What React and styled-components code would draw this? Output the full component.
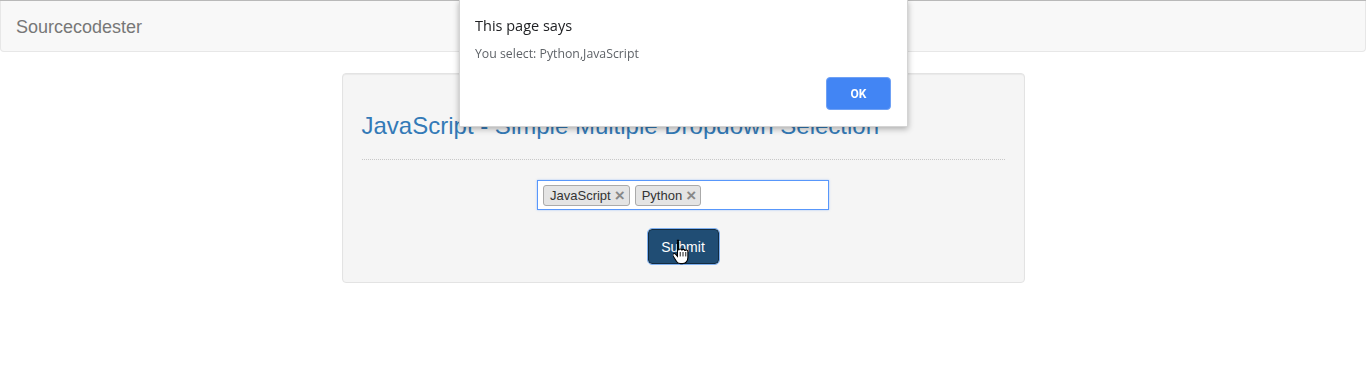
import React from "react";
import styled, { createGlobalStyle } from "styled-components";

const Global = createGlobalStyle`
  html, body { margin: 0; padding: 0; background: #fff; }
  body { font-family: "Liberation Sans", Arial, sans-serif; font-size: 14px; color: #333; }
  * { box-sizing: border-box; }
`;

const TopEdge = styled.div`
  height: 1px;
  background: #b9b9b9;
`;

const Navbar = styled.nav`
  height: 51px;
  background: #f8f8f8;
  border: 1px solid #e7e7e7;
  border-top: none;
  border-radius: 0 0 4px 4px;
  display: flex;
  align-items: center;
  padding: 2px 15px 0;
  margin-bottom: 21px;
`;

const Brand = styled.a`
  font-size: 18px;
  color: #777;
  text-decoration: none;
`;

const Well = styled.div`
  width: 683px;
  margin: 0 auto;
  background: #f5f5f5;
  border: 1px solid #e3e3e3;
  border-radius: 4px;
  box-shadow: inset 0 1px 1px rgba(0, 0, 0, 0.05);
  padding: 19px 19px 18px;
`;

const Title = styled.h3`
  margin: 20px 0 0;
  font-size: 24px;
  font-weight: 400;
  line-height: 26px;
  color: #337ab7;
`;

const Rule = styled.hr`
  margin: 20px 0 20px;
  border: 0;
  border-top: 1px dotted #c8c8c8;
`;

const Center = styled.div`
  display: flex;
  flex-direction: column;
  align-items: center;
  gap: 19px;
`;

const SelectBox = styled.div`
  width: 292px;
  height: 30px;
  background: #fff;
  border: 1px solid #5897fb;
  box-shadow: 0 0 2px rgba(88, 151, 251, 0.5);
  display: flex;
  align-items: center;
  gap: 5px;
  padding: 0 5px;
`;

const Tag = styled.span`
  display: inline-flex;
  align-items: center;
  gap: 4px;
  height: 21px;
  padding: 0 4px 0 6px;
  background: #e4e4e4;
  border: 1px solid #aaa;
  border-radius: 3px;
  font-size: 13px;
  color: #333;
`;

const Remove = styled.span`
  color: #888;
  font-weight: 700;
  font-size: 17px;
  line-height: 1;
  margin-top: 1px;
`;

const ButtonWrap = styled.div`
  position: relative;
`;

const Button = styled.button`
  width: 71px;
  height: 35px;
  background: #204d74;
  border: 1px solid #122b40;
  border-radius: 4px;
  color: #fff;
  font-family: "Liberation Sans", Arial, sans-serif;
  font-size: 14px;
  outline: 1px solid #7fb0f0;
  outline-offset: 0;
  padding: 0;
`;

const Cursor = styled.svg`
  position: absolute;
  left: 25px;
  top: 9px;
  pointer-events: none;
`;

const Dialog = styled.div`
  position: fixed;
  top: 0;
  left: 459px;
  width: 449px;
  height: 127px;
  background: #fff;
  border: 1px solid #d4d4d4;
  border-top: none;
  box-shadow: 0 2px 6px rgba(0, 0, 0, 0.3);
  font-family: "Open Sans", "Noto Sans", sans-serif;
  padding: 16px 16px 16px 15px;
  display: flex;
  flex-direction: column;
`;

const DialogTitle = styled.div`
  font-size: 14.5px;
  color: #202124;
  line-height: 20px;
`;

const DialogMsg = styled.div`
  margin-top: 9px;
  font-size: 12.3px;
  color: #5f6368;
  line-height: 17px;
`;

const DialogActions = styled.div`
  margin-top: auto;
  display: flex;
  justify-content: flex-end;
`;

const OkButton = styled.button`
  width: 65px;
  height: 33px;
  background: #4285f4;
  border: 1px solid #6fa1f5;
  border-radius: 4px;
  color: #fff;
  font-family: "Roboto", "Noto Sans", sans-serif;
  font-weight: 700;
  font-size: 12px;
`;

export default function App() {
  return (
    <>
      <Global />
      <TopEdge />
      <Navbar>
        <Brand>Sourcecodester</Brand>
      </Navbar>
      <Well>
        <Title>JavaScript - Simple Multiple Dropdown Selection</Title>
        <Rule />
        <Center>
          <SelectBox>
            <Tag>
              JavaScript <Remove>×</Remove>
            </Tag>
            <Tag>
              Python <Remove>×</Remove>
            </Tag>
          </SelectBox>
          <ButtonWrap>
            <Button>Submit</Button>
            <Cursor width="20" height="28" viewBox="0 0 18 24">
              <path
                d="M5 1.5c.9 0 1.5.6 1.5 1.5v7.5c.2-.8.8-1.2 1.5-1.2s1.3.5 1.4 1.3c.2-.6.7-1 1.4-1 .8 0 1.4.6 1.4 1.4.2-.5.7-.8 1.3-.8.8 0 1.4.6 1.4 1.4V17c0 3-2 5.5-5 5.5H8.3c-1.6 0-2.7-.7-3.6-2L1.6 15.6c-.5-.8-.3-1.6.3-2 .6-.4 1.4-.3 1.9.3l1.7 2V3c0-.9.6-1.5 1.5-1.5z"
                fill="#fff"
                stroke="#000"
                strokeWidth="1"
                transform="translate(-1.5 0)"
              />
              <path d="M6.5 12v4M9 12v4M11.5 12v4" stroke="#000" strokeWidth="0.8" />
            </Cursor>
          </ButtonWrap>
        </Center>
      </Well>
      <Dialog>
        <DialogTitle>This page says</DialogTitle>
        <DialogMsg>You select: Python,JavaScript</DialogMsg>
        <DialogActions>
          <OkButton>OK</OkButton>
        </DialogActions>
      </Dialog>
    </>
  );
}
